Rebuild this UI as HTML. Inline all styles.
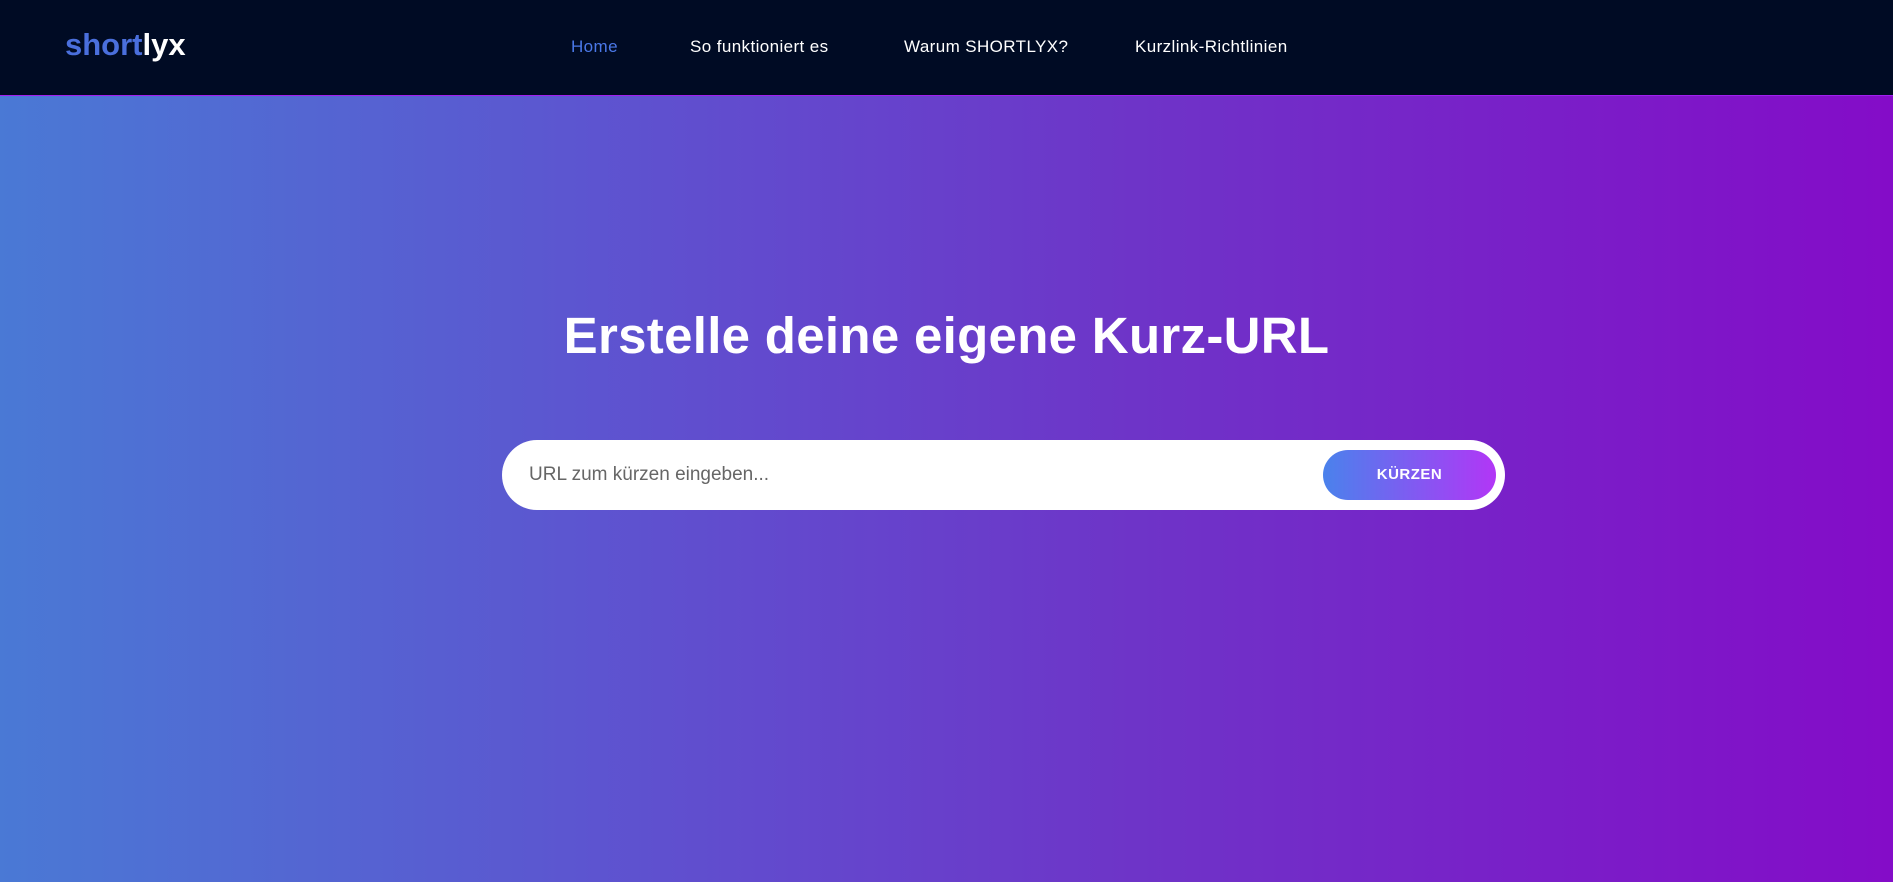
<!DOCTYPE html>
<html><head><meta charset="utf-8"><style>
*{margin:0;padding:0;box-sizing:border-box}
body{width:1893px;height:882px;overflow:hidden;font-family:"Liberation Sans",sans-serif;background:linear-gradient(90deg,#4a79d5 0%,#5f50cf 35%,#6e34c8 60%,#840cc8 100%)}
header{position:absolute;left:0;top:0;width:1893px;height:96px;background:#000b24;border-bottom:1px solid #a21ef0}
.logo{position:absolute;left:65px;top:27px;font-size:31px;font-weight:bold;color:#fff;letter-spacing:0px}
.logo span{color:#4a6fdc}
nav a{position:absolute;top:37px;font-size:17px;color:#fff;text-decoration:none;white-space:nowrap;letter-spacing:0.4px}
h1{position:absolute;left:0;width:1893px;top:306px;text-align:center;color:#fff;font-size:51px;font-weight:bold;letter-spacing:0.3px}
.box{position:absolute;left:502px;top:440px;width:1003px;height:70px;background:#fff;border-radius:35px}
.ph{position:absolute;left:27px;top:24px;font-size:19px;color:#666}
.btn{position:absolute;left:821px;top:10px;width:173px;height:50px;border-radius:25px;background:linear-gradient(90deg,#4a82ec,#b236f6);color:#fff;font-weight:bold;font-size:15px;text-align:center;line-height:50px;letter-spacing:0.5px}
</style></head><body>
<header>
<div class="logo"><span>short</span>lyx</div>
<nav>
<a style="left:571px;color:#4a78e8">Home</a>
<a style="left:690px">So funktioniert es</a>
<a style="left:904px">Warum SHORTLYX?</a>
<a style="left:1135px">Kurzlink-Richtlinien</a>
</nav>
</header>
<h1>Erstelle deine eigene Kurz-URL</h1>
<div class="box"><div class="ph">URL zum kürzen eingeben...</div><div class="btn">KÜRZEN</div></div>
</body></html>
